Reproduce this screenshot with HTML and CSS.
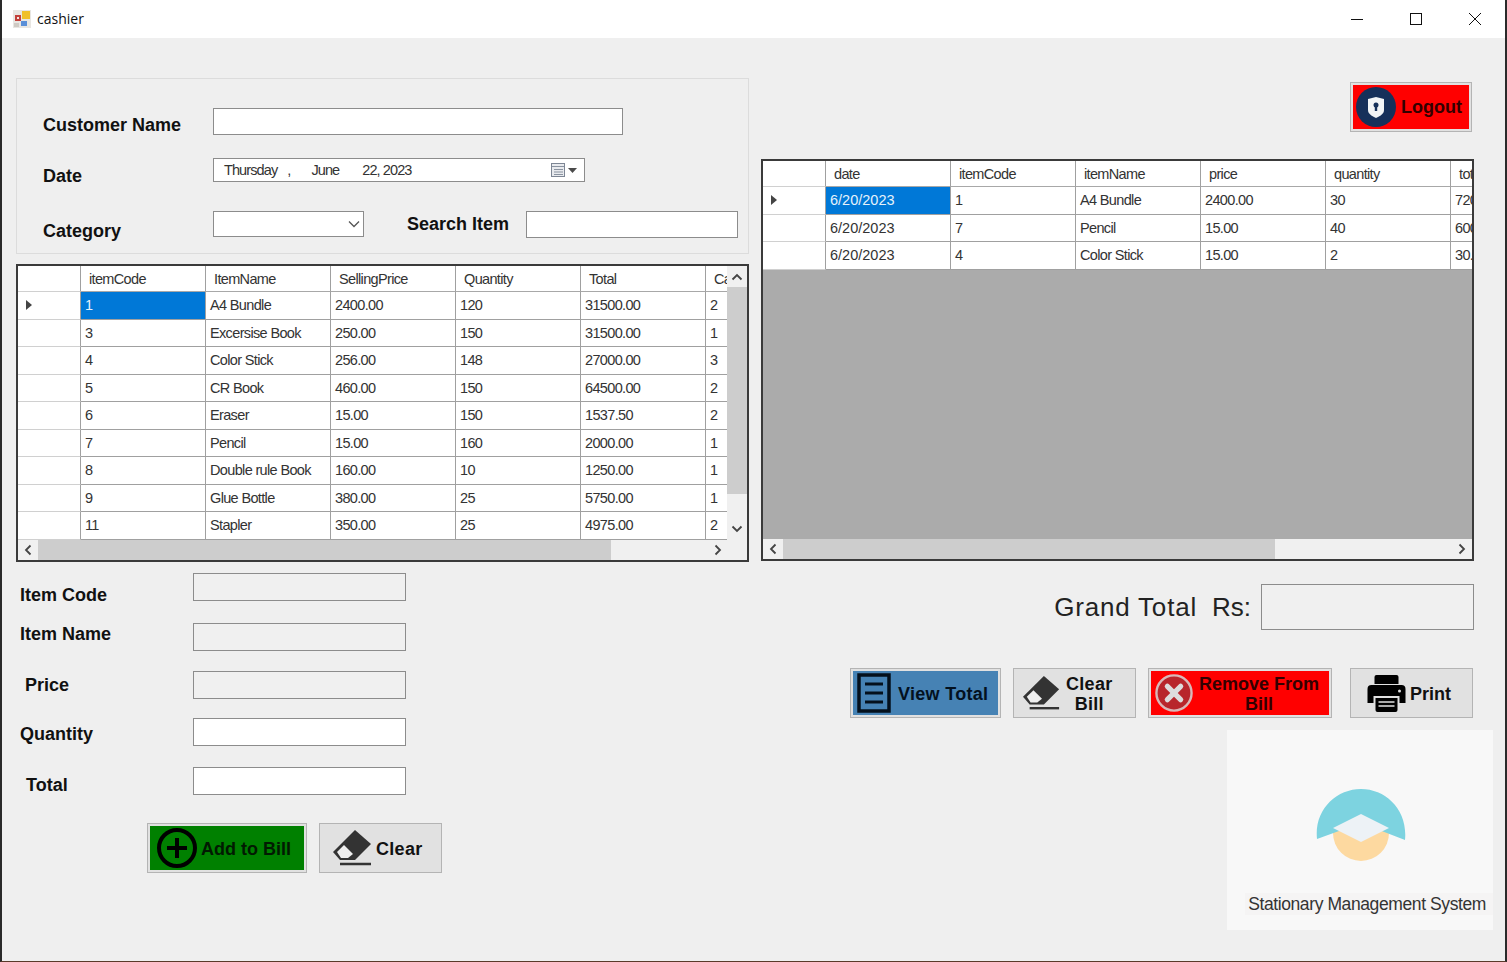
FILE: index.html
```html
<!DOCTYPE html>
<html lang="en">
<head>
    <meta charset="UTF-8">
    <meta name="viewport" content="width=device-width, initial-scale=1.0">
    <title>cashier</title>
    <link rel="stylesheet" href="styles.css">
</head>
<body>
    <div class="window">
        <div class="titlebar">
            <svg class="app-icon" width="18" height="18" viewBox="0 0 18 18">
                <rect x="0" y="0" width="18" height="18" fill="#e8e6e2"/>
                <rect x="9" y="1" width="8" height="8" fill="#f0c02a"/>
                <rect x="2" y="5" width="6" height="6" fill="#c2403a"/>
                <rect x="4" y="7" width="2" height="2" fill="#f4e4e0"/>
                <rect x="8" y="11" width="6" height="5" fill="#5a8fd8"/>
                <rect x="1" y="13" width="5" height="4" fill="#cfcac4"/>
            </svg>
            <span class="title-text">cashier</span>
            <div class="win-controls">
                <svg width="14" height="14" viewBox="0 0 14 14"><path d="M1 7.5h12" stroke="#111" fill="none"/></svg>
                <svg width="14" height="14" viewBox="0 0 14 14"><rect x="1.5" y="1.5" width="11" height="11" stroke="#111" fill="none"/></svg>
                <svg width="14" height="14" viewBox="0 0 14 14"><path d="M1 1l12 12M13 1L1 13" stroke="#111" fill="none"/></svg>
            </div>
        </div>

        <div class="content">
            <div class="left-col">
                <div class="group-box">
                    <div class="group-row row-name">
                        <label class="field-label name-label">Customer Name</label>
                        <div class="input name-input"></div>
                    </div>
                    <div class="group-row row-date">
                        <label class="field-label date-label">Date</label>
                        <div class="input date-picker">
                            <span class="dp-day">Thursday</span><span class="dp-comma">,</span><span class="dp-month">June</span><span class="dp-rest">22, 2023</span>
                            <svg class="dp-icon" width="28" height="16" viewBox="0 0 28 16">
                                <rect x="1.5" y="1.5" width="13" height="13" fill="#e8eaee" stroke="#7d8694"/>
                                <path d="M2 4.5h12M4 7.5h9M4 10h9M4 12.5h9" stroke="#8a93a0" fill="none"/>
                                <path d="M18 6h9l-4.5 5z" fill="#4a4a4a"/>
                            </svg>
                        </div>
                    </div>
                    <div class="group-row row-cat">
                        <label class="field-label cat-label">Category</label>
                        <div class="input combo">
                            <svg width="12" height="8" viewBox="0 0 12 8"><path d="M1 1.5l5 5 5-5" stroke="#555" stroke-width="1.3" fill="none"/></svg>
                        </div>
                        <label class="field-label search-label">Search Item</label>
                        <div class="input search-input"></div>
                    </div>
                </div>

                <div class="grid items-grid">
                    <div class="grid-main">
                        <div class="grid-view">
                            <table>
                                <thead>
                                    <tr><th class="row-head"></th><th>itemCode</th><th>ItemName</th><th>SellingPrice</th><th>Quantity</th><th>Total</th><th>Ca</th></tr>
                                </thead>
                                <tbody>
                                    <tr><td class="row-head"><span class="row-arrow"></span></td><td class="selected">1</td><td>A4 Bundle</td><td>2400.00</td><td>120</td><td>31500.00</td><td>2</td></tr>
                                    <tr><td class="row-head"></td><td>3</td><td>Excersise Book</td><td>250.00</td><td>150</td><td>31500.00</td><td>1</td></tr>
                                    <tr><td class="row-head"></td><td>4</td><td>Color Stick</td><td>256.00</td><td>148</td><td>27000.00</td><td>3</td></tr>
                                    <tr><td class="row-head"></td><td>5</td><td>CR Book</td><td>460.00</td><td>150</td><td>64500.00</td><td>2</td></tr>
                                    <tr><td class="row-head"></td><td>6</td><td>Eraser</td><td>15.00</td><td>150</td><td>1537.50</td><td>2</td></tr>
                                    <tr><td class="row-head"></td><td>7</td><td>Pencil</td><td>15.00</td><td>160</td><td>2000.00</td><td>1</td></tr>
                                    <tr><td class="row-head"></td><td>8</td><td>Double rule Book</td><td>160.00</td><td>10</td><td>1250.00</td><td>1</td></tr>
                                    <tr><td class="row-head"></td><td>9</td><td>Glue Bottle</td><td>380.00</td><td>25</td><td>5750.00</td><td>1</td></tr>
                                    <tr><td class="row-head"></td><td>11</td><td>Stapler</td><td>350.00</td><td>25</td><td>4975.00</td><td>2</td></tr>
                                </tbody>
                            </table>
                        </div>
                        <div class="vscroll">
                            <svg width="12" height="8" viewBox="0 0 12 8"><path d="M1.5 6.5L6 2l4.5 4.5" stroke="#444" stroke-width="1.8" fill="none"/></svg>
                            <div class="vthumb"></div>
                            <svg width="12" height="8" viewBox="0 0 12 8"><path d="M1.5 1.5L6 6l4.5-4.5" stroke="#444" stroke-width="1.8" fill="none"/></svg>
                        </div>
                    </div>
                    <div class="hscroll">
                        <svg width="8" height="12" viewBox="0 0 8 12"><path d="M6.5 1.5L2 6l4.5 4.5" stroke="#444" stroke-width="1.8" fill="none"/></svg>
                        <div class="htrack"><div class="hthumb items-thumb"></div></div>
                        <svg width="8" height="12" viewBox="0 0 8 12"><path d="M1.5 1.5L6 6l-4.5 4.5" stroke="#444" stroke-width="1.8" fill="none"/></svg>
                    </div>
                </div>

                <div class="item-form">
                    <div class="form-row">
                        <label class="field-label form-label lbl-code">Item Code</label>
                        <div class="input form-input off"></div>
                    </div>
                    <div class="form-row">
                        <label class="field-label form-label lbl-name">Item Name</label>
                        <div class="input form-input off"></div>
                    </div>
                    <div class="form-row">
                        <label class="field-label form-label lbl-price">Price</label>
                        <div class="input form-input off"></div>
                    </div>
                    <div class="form-row">
                        <label class="field-label form-label lbl-qty">Quantity</label>
                        <div class="input form-input"></div>
                    </div>
                    <div class="form-row">
                        <label class="field-label form-label lbl-total">Total</label>
                        <div class="input form-input"></div>
                    </div>
                </div>

                <div class="form-actions">
                    <button class="btn btn-green add-btn">
                        <svg width="42" height="42" viewBox="0 0 42 42"><circle cx="21" cy="21" r="18" fill="none" stroke="#000" stroke-width="4"/><path d="M21 11v20M11 21h20" stroke="#000" stroke-width="4" fill="none"/></svg>
                        <span>Add to Bill</span>
                    </button>
                    <button class="btn clear-btn">
                        <svg width="40" height="36" viewBox="0 0 40 36"><path d="M22 0l16 14-16 16H7l-7-8z" fill="#333"/><path d="M4 22l7-7 9 9-5 4H8z" fill="#eee"/><path d="M7 34h31" stroke="#333" stroke-width="2.5"/></svg>
                        <span>Clear</span>
                    </button>
                </div>
            </div>

            <div class="right-col">
                <div class="logout-row">
                    <button class="btn btn-red logout-btn">
                        <svg width="40" height="40" viewBox="0 0 40 40"><circle cx="20" cy="20" r="20" fill="#16305a"/><path d="M12 12l8-2 8 2v11c0 4-4 6-8 8-4-2-8-4-8-8z" fill="#f2f4f6"/><circle cx="20" cy="18" r="2.5" fill="#16305a"/><rect x="18.8" y="18" width="2.4" height="6" fill="#16305a"/></svg>
                        <span>Logout</span>
                    </button>
                </div>

                <div class="grid bill-grid">
                    <div class="grid-view">
                        <table>
                            <thead>
                                <tr><th class="row-head"></th><th>date</th><th>itemCode</th><th>itemName</th><th>price</th><th>quantity</th><th>total</th></tr>
                            </thead>
                            <tbody>
                                <tr><td class="row-head"><span class="row-arrow"></span></td><td class="selected date-cell">6/20/2023</td><td>1</td><td>A4 Bundle</td><td>2400.00</td><td>30</td><td>72000.00</td></tr>
                                <tr><td class="row-head"></td><td class="date-cell">6/20/2023</td><td>7</td><td>Pencil</td><td>15.00</td><td>40</td><td>600.00</td></tr>
                                <tr><td class="row-head"></td><td class="date-cell">6/20/2023</td><td>4</td><td>Color Stick</td><td>15.00</td><td>2</td><td>30.00</td></tr>
                            </tbody>
                        </table>
                    </div>
                    <div class="hscroll">
                        <svg width="8" height="12" viewBox="0 0 8 12"><path d="M6.5 1.5L2 6l4.5 4.5" stroke="#444" stroke-width="1.8" fill="none"/></svg>
                        <div class="htrack"><div class="hthumb bill-thumb"></div></div>
                        <svg width="8" height="12" viewBox="0 0 8 12"><path d="M1.5 1.5L6 6l-4.5 4.5" stroke="#444" stroke-width="1.8" fill="none"/></svg>
                    </div>
                </div>

                <div class="total-row">
                    <span class="total-text grand">Grand Total</span>
                    <span class="total-text rs">Rs:</span>
                    <div class="input total-box off"></div>
                </div>

                <div class="bill-actions">
                    <button class="btn btn-blue view-btn">
                        <svg width="34" height="40" viewBox="0 0 34 40"><rect x="2" y="2" width="30" height="36" fill="none" stroke="#04101c" stroke-width="3.5"/><path d="M8 11h18M8 20h18M8 29h18" stroke="#04101c" stroke-width="3" fill="none"/></svg>
                        <span>View Total</span>
                    </button>
                    <button class="btn clear-bill-btn">
                        <svg width="38" height="36" viewBox="0 0 40 36"><path d="M22 0l16 14-16 16H7l-7-8z" fill="#333"/><path d="M4 22l7-7 9 9-5 4H8z" fill="#eee"/><path d="M7 34h31" stroke="#333" stroke-width="2.5"/></svg>
                        <span>Clear<br>Bill</span>
                    </button>
                    <button class="btn btn-red remove-btn">
                        <svg width="38" height="38" viewBox="0 0 40 40"><circle cx="20" cy="20" r="18.5" fill="#b8262c" stroke="#d9b8b8" stroke-width="2.5"/><path d="M13 13l14 14M27 13L13 27" stroke="#ddd" stroke-width="5.5" stroke-linecap="round"/></svg>
                        <span>Remove From<br>Bill</span>
                    </button>
                    <button class="btn print-btn">
                        <svg width="41" height="38" viewBox="0 0 40 38"><path d="M8 10V3a2 2 0 0 1 2-2h20a2 2 0 0 1 2 2v7z" fill="#000"/><path d="M5 11h30a4 4 0 0 1 4 4v14h-6v-7H7v7H1V15a4 4 0 0 1 4-4z" fill="#000"/><path d="M9 24h22v12a2 2 0 0 1-2 2H11a2 2 0 0 1-2-2z" fill="#000"/><path d="M12 28h16M12 32h16" stroke="#e1e1e1" stroke-width="1.5"/><circle cx="33" cy="17" r="1.5" fill="#e1e1e1"/></svg>
                        <span>Print</span>
                    </button>
                </div>

                <div class="logo-panel">
                    <svg class="logo" width="90" height="74" viewBox="0 0 90 74">
                        <circle cx="45" cy="45" r="28" fill="#fdd9a0"/>
                        <path d="M1 51C-2 22 20 1 45 1s47 21 44 51L45 35z" fill="#7dd3e0"/>
                        <path d="M45 26l28 14-28 14-28-14z" fill="#edf2f6"/>
                    </svg>
                    <div class="logo-text">Stationary Management System</div>
                </div>
            </div>
        </div>
    </div>
</body>
</html>
```

FILE: styles.css
```css
* {
    box-sizing: border-box;
}
body {
    margin: 0;
    font-family: "Liberation Sans", Arial, sans-serif;
    background: #efefef;
}
.window {
    width: 1507px;
    height: 962px;
    overflow: hidden;
    background: #efefef;
    border-left: 2px solid #2a2a2a;
    border-right: 2px solid #2a2a2a;
    border-bottom: 1px solid #5a3a2a;
}

/* title bar */
.titlebar {
    height: 38px;
    background: #fff;
    display: flex;
    align-items: center;
    padding-left: 11px;
}
.title-text {
    margin-left: 6px;
    padding-bottom: 2px;
    font-family: "Open Sans", sans-serif;
    font-size: 14px;
    color: #111;
}
.win-controls {
    margin-left: auto;
    display: flex;
    gap: 45px;
    padding-right: 23px;
}

.content {
    display: flex;
    gap: 12px;
    padding-left: 14px;
}
.left-col {
    width: 733px;
    padding-top: 40px;
}
.right-col {
    width: 732px;
    display: flex;
    flex-direction: column;
    padding-top: 44px;
}

.field-label {
    font-weight: bold;
    font-size: 18px;
    color: #111;
}
.input {
    background: #fff;
    border: 1px solid #8c8c8c;
}
.input.off {
    background: #f0f0f0;
}

/* customer box */
.group-box {
    height: 176px;
    border: 1px solid #dcdcdc;
    padding: 29px 0 0 26px;
}
.group-row {
    display: flex;
    align-items: center;
}
.group-row .field-label {
    width: 170px;
}
.row-name {
    height: 27px;
}
.row-date {
    height: 24px;
    margin-top: 23px;
}
.row-cat {
    height: 27px;
    margin-top: 29px;
}
.name-label {
    padding-top: 7px;
}
.date-label {
    padding-top: 12px;
}
.cat-label {
    padding-top: 14px;
}
.name-input {
    width: 410px;
    height: 27px;
}
.date-picker {
    width: 372px;
    height: 24px;
    display: flex;
    align-items: center;
    font-size: 14.5px;
    letter-spacing: -0.9px;
    color: #333;
    padding-left: 10px;
}
.dp-comma {
    margin-left: 10px;
}
.dp-month {
    margin-left: 21px;
}
.dp-rest {
    margin-left: 23px;
}
.dp-icon {
    margin-left: auto;
    margin-right: 6px;
}
.combo {
    width: 151px;
    height: 26px;
    margin-top: -1px;
    display: flex;
    align-items: center;
    justify-content: flex-end;
    padding-right: 3px;
}
.group-row .search-label {
    width: auto;
    margin-left: 43px;
}
.search-input {
    width: 212px;
    height: 27px;
    margin-left: 17px;
}

/* data grids */
.grid {
    border: 2px solid #3a3a3a;
    background: #f0f0f0;
}
.items-grid {
    height: 298px;
    margin-top: 10px;
}
.bill-grid {
    width: 713px;
    height: 402px;
    margin-top: 27px;
    display: flex;
    flex-direction: column;
}
.grid-main {
    display: flex;
    height: 274px;
}
.grid-view {
    flex: 1;
    overflow: hidden;
    min-width: 0;
}
.bill-grid .grid-view {
    background: #ababab;
}
.grid table {
    border-collapse: separate;
    border-spacing: 0;
    table-layout: fixed;
    width: 813px;
    background: #fff;
    font-size: 14.5px;
    letter-spacing: -0.65px;
    color: #333;
}
.grid th,
.grid td {
    width: 125px;
    padding: 0 0 0 4px;
    border-right: 1px solid #a0a0a0;
    border-bottom: 1px solid #a0a0a0;
    overflow: hidden;
    white-space: nowrap;
    text-align: left;
    font-weight: normal;
}
.grid th {
    height: 26px;
    padding-left: 8px;
    border-bottom-color: #a8a8a8;
}
.grid td {
    height: 27.5px;
}
.grid .row-head {
    width: 63px;
    padding-left: 8px;
    border-bottom-color: #d0d0d0;
}
.grid td.date-cell {
    letter-spacing: 0;
}
.grid td.selected {
    background: #0078d7;
    color: #e6f2fb;
}
.row-arrow {
    display: block;
    width: 0;
    height: 0;
    border-left: 6px solid #444;
    border-top: 5px solid transparent;
    border-bottom: 5px solid transparent;
}
.vscroll {
    width: 20px;
    display: flex;
    flex-direction: column;
    align-items: center;
    padding-top: 7px;
}
.vthumb {
    width: 100%;
    height: 207px;
    margin: 6px 0 31px;
    background: #cdcdcd;
}
.hscroll {
    height: 20px;
    display: flex;
    align-items: center;
    padding: 0 25px 0 6px;
    background: #f0f0f0;
}
.bill-grid .hscroll {
    padding-right: 6px;
}
.htrack {
    flex: 1;
    height: 100%;
    padding: 0 0 0 6px;
}
.hthumb {
    height: 100%;
    background: #cdcdcd;
}
.items-thumb {
    width: 573px;
}
.bill-thumb {
    width: 492px;
}

/* item form */
.item-form {
    margin-top: 11px;
    display: flex;
    flex-direction: column;
    gap: 20px;
}
.form-row {
    display: flex;
    align-items: center;
    height: 28px;
}
.form-row:nth-child(2) {
    margin-top: 2px;
}
.form-row:nth-child(4) {
    margin-top: -1px;
}
.form-row:nth-child(5) {
    margin-top: 1px;
}
.form-label {
    width: 177px;
    padding-left: 4px;
}
.form-input {
    width: 213px;
    height: 28px;
}
.lbl-code {
    padding-top: 16px;
}
.lbl-name {
    padding-bottom: 6px;
}
.lbl-price {
    padding-left: 9px;
}
.lbl-qty {
    padding-top: 4px;
}
.lbl-total {
    padding-left: 10px;
    padding-top: 8px;
}

/* buttons */
.btn {
    display: flex;
    align-items: center;
    justify-content: flex-start;
    height: 50px;
    padding: 0;
    font-family: inherit;
    font-weight: bold;
    font-size: 18px;
    color: #111;
    background: #e1e1e1;
    border: 1px solid #b4b4b4;
    outline: none;
}
.btn span {
    padding-top: 2px;
}
.btn-red,
.btn-green,
.btn-blue {
    box-shadow: inset 0 0 0 2px #e1e1e1;
}
.btn-red {
    background: #f00;
    color: #300;
}
.btn-green {
    background: #008000;
    color: #021a02;
}
.btn-blue {
    background: #4682b4;
    color: #03111f;
}
.form-actions {
    margin: 28px 0 0 131px;
    display: flex;
    gap: 12px;
}
.add-btn {
    width: 160px;
    padding-left: 8px;
    gap: 3px;
}
.clear-btn {
    width: 123px;
    padding-left: 13px;
    gap: 3px;
    letter-spacing: 0.3px;
}
.logout-row {
    display: flex;
    width: 711px;
    justify-content: flex-end;
}
.logout-btn {
    width: 122px;
    padding-left: 5px;
    gap: 5px;
}
.logout-btn span {
    padding-top: 0;
}
.total-row {
    width: 713px;
    margin-top: 23px;
    display: flex;
    justify-content: flex-end;
    align-items: center;
    gap: 10px;
}
.total-text {
    font-size: 26px;
    color: #222;
}
.grand {
    letter-spacing: 0.8px;
}
.rs {
    margin-left: 5px;
}
.total-box {
    width: 213px;
    height: 46px;
}
.bill-actions {
    width: 712px;
    margin-top: 38px;
    display: flex;
    justify-content: flex-end;
    gap: 12px;
}
.view-btn {
    width: 151px;
    padding-left: 6px;
    gap: 7px;
    letter-spacing: 0.3px;
}
.clear-bill-btn {
    width: 123px;
    padding-left: 9px;
    gap: 5px;
    line-height: 20px;
    letter-spacing: 0.3px;
}
.remove-btn {
    width: 184px;
    padding-left: 6px;
    gap: 6px;
    margin-right: 6px;
    line-height: 20px;
}
.print-btn {
    width: 123px;
    padding-left: 15px;
    gap: 3px;
}

/* logo */
.logo-panel {
    width: 266px;
    height: 200px;
    margin-top: 12px;
    align-self: flex-end;
    background: #f8f8f8;
    display: flex;
    flex-direction: column;
    align-items: center;
    padding-top: 58px;
}
.logo {
    margin-left: 1px;
}
.logo-text {
    margin: 31px 0 0 18px;
    align-self: stretch;
    padding-right: 7px;
    text-align: right;
    font-size: 17.5px;
    letter-spacing: -0.4px;
    line-height: 22px;
    color: #333;
    background: #f5f4f4;
}
```
